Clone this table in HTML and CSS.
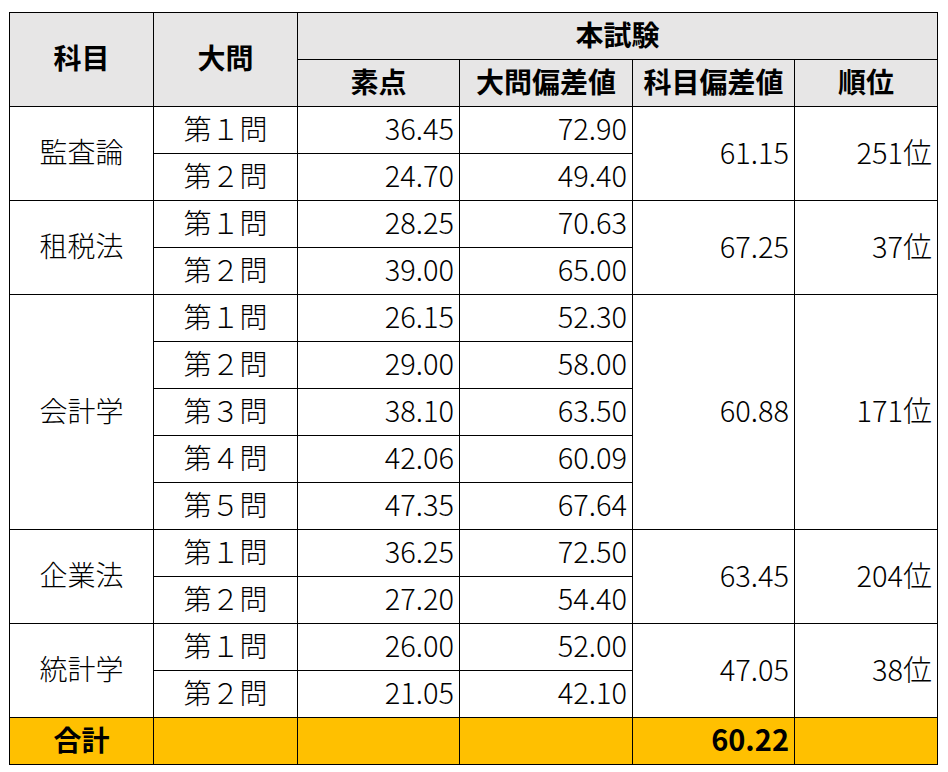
FILE: index.html
```html
<!DOCTYPE html>
<html lang="ja">
<head>
<meta charset="utf-8">
<link rel="stylesheet" href="styles.css">
</head>
<body>
<div class="wrap">
<table class="score">
  <colgroup>
    <col class="c1"><col class="c2"><col class="c3"><col class="c4"><col class="c5"><col class="c6">
  </colgroup>
  <thead>
    <tr>
      <th rowspan="2">科目</th>
      <th rowspan="2">大問</th>
      <th colspan="4">本試験</th>
    </tr>
    <tr>
      <th>素点</th>
      <th>大問偏差値</th>
      <th>科目偏差値</th>
      <th>順位</th>
    </tr>
  </thead>
  <tbody>
    <tr><td rowspan="2" class="ctr">監査論</td><td class="ctr">第１問</td><td class="num">36.45</td><td class="num">72.90</td><td rowspan="2" class="num">61.15</td><td rowspan="2" class="num">251位</td></tr>
    <tr><td class="ctr">第２問</td><td class="num">24.70</td><td class="num">49.40</td></tr>
    <tr><td rowspan="2" class="ctr">租税法</td><td class="ctr">第１問</td><td class="num">28.25</td><td class="num">70.63</td><td rowspan="2" class="num">67.25</td><td rowspan="2" class="num">37位</td></tr>
    <tr><td class="ctr">第２問</td><td class="num">39.00</td><td class="num">65.00</td></tr>
    <tr><td rowspan="5" class="ctr">会計学</td><td class="ctr">第１問</td><td class="num">26.15</td><td class="num">52.30</td><td rowspan="5" class="num">60.88</td><td rowspan="5" class="num">171位</td></tr>
    <tr><td class="ctr">第２問</td><td class="num">29.00</td><td class="num">58.00</td></tr>
    <tr><td class="ctr">第３問</td><td class="num">38.10</td><td class="num">63.50</td></tr>
    <tr><td class="ctr">第４問</td><td class="num">42.06</td><td class="num">60.09</td></tr>
    <tr><td class="ctr">第５問</td><td class="num">47.35</td><td class="num">67.64</td></tr>
    <tr><td rowspan="2" class="ctr">企業法</td><td class="ctr">第１問</td><td class="num">36.25</td><td class="num">72.50</td><td rowspan="2" class="num">63.45</td><td rowspan="2" class="num">204位</td></tr>
    <tr><td class="ctr">第２問</td><td class="num">27.20</td><td class="num">54.40</td></tr>
    <tr><td rowspan="2" class="ctr">統計学</td><td class="ctr">第１問</td><td class="num">26.00</td><td class="num">52.00</td><td rowspan="2" class="num">47.05</td><td rowspan="2" class="num">38位</td></tr>
    <tr><td class="ctr">第２問</td><td class="num">21.05</td><td class="num">42.10</td></tr>
  </tbody>
  <tfoot>
    <tr class="total"><td class="ctr">合計</td><td></td><td></td><td></td><td class="num">60.22</td><td></td></tr>
  </tfoot>
</table>
</div>
</body>
</html>
```
FILE: styles.css
```css
html, body {
  margin: 0;
  padding: 0;
  background: #ffffff;
}
.wrap {
  padding: 12px 0 0 9px;
}
.score {
  border-collapse: collapse;
  table-layout: fixed;
  width: 929px;
  font-family: "Noto Sans CJK JP", "Noto Sans", sans-serif;
  font-size: 28px;
  color: #000;
}
.c1 { width: 144px; }
.c2 { width: 144px; }
.c3 { width: 162px; }
.c4 { width: 173px; }
.c5 { width: 162px; }
.c6 { width: 143px; }
.score tr {
  height: 47px;
}
.score th,
.score td {
  border: 1px solid #000;
  padding: 0 5px 5px 5px;
  line-height: 1;
  white-space: nowrap;
  overflow: hidden;
  font-weight: 300;
}
.score th {
  background: #e7e6e6;
  font-weight: 700;
  text-align: center;
}
.ctr {
  text-align: center;
}
.num {
  text-align: right;
  font-size: 29px;
}
.score .total td {
  background: #ffc000;
  font-weight: 700;
}
```
